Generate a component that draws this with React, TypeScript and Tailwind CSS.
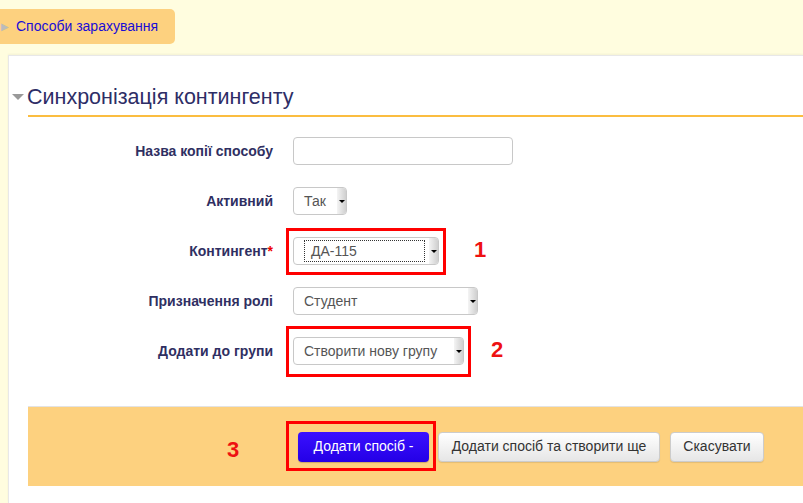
import type { ReactNode } from "react";

const font = { fontFamily: '"Liberation Sans", Arial, sans-serif' };

const Select = ({
  value,
  width,
  focused = false,
}: {
  value: string;
  width: string;
  focused?: boolean;
}) => (
  <div
    className={`relative flex h-[28px] items-stretch rounded-[4px] border border-[#c8c8c8] bg-white ${width}`}
  >
    <div className="flex flex-1 items-center pl-[10px] text-[14px] text-[#555]">
      {focused ? (
        <div className="flex h-[22px] flex-1 items-center border border-dotted border-[#333] pl-[6px]">
          {value}
        </div>
      ) : (
        value
      )}
    </div>
    <div className="ml-[4px] flex w-[9px] items-center justify-center rounded-r-[3px] bg-gradient-to-r from-[#f4f4f4] to-[#cfcfcf]">
      <div className="h-0 w-0 border-x-[3px] border-t-[3px] border-x-transparent border-t-black" />
    </div>
  </div>
);

const Row = ({ label, children }: { label: ReactNode; children: ReactNode }) => (
  <div className="flex h-[28px] items-center">
    <div className="w-[264px] text-right text-[14px] font-bold text-[#2f2f62]">
      {label}
    </div>
    <div className="ml-[20px] flex items-center">{children}</div>
  </div>
);

const Marker = ({ n }: { n: string }) => (
  <span className="text-[22px] font-bold leading-none text-[#ee1111]">{n}</span>
);

export default function App() {
  return (
    <div className="min-h-[503px] overflow-hidden bg-[#fffddf]" style={font}>
      {/* tab strip */}
      <div className="h-[55px] pt-[9px]">
        <div className="flex h-[35px] w-[175px] items-center rounded-r-[5px] bg-[#fdd17f]">
          <span className="ml-[1px] text-[10px] text-[#bbb]">▶</span>
          <span className="ml-[7px] text-[14px] text-[#1a0dd6]">
            Способи зарахування
          </span>
        </div>
      </div>

      {/* panel */}
      <div className="ml-[8px] min-h-[448px] border-l border-t border-[#e8e8e8] bg-white shadow-[0_-1px_2px_rgba(0,0,0,0.05)]">
        <div className="flex items-center pl-[3px] pt-[29px]">
          <div className="h-0 w-0 border-x-[6px] border-t-[6px] border-x-transparent border-t-[#999]" />
          <h2 className="ml-[3px] text-[21.5px] leading-[24px] text-[#2d2d66]">
            Синхронізація контингенту
          </h2>
        </div>
        <div className="ml-[19px] mt-[6px] h-[2px] bg-[#fbbd40]" />

        <div className="mt-[20px] flex flex-col gap-[22px]">
          <Row label="Назва копії способу">
            <div className="h-[28px] w-[220px] rounded-[4px] border border-[#c8c8c8] bg-white" />
          </Row>
          <Row label="Активний">
            <Select value="Так" width="w-[54px]" />
          </Row>
          <Row
            label={
              <>
                Контингент<span className="text-[#e00]">*</span>
              </>
            }
          >
            <div className="relative">
              <Select value="ДА-115" width="w-[146px]" focused />
              <div className="pointer-events-none absolute -bottom-[10px] -left-[7px] -right-[7px] -top-[9px] border-[3px] border-[#f00]" />
            </div>
            <span className="ml-[35px]">
              <Marker n="1" />
            </span>
          </Row>
          <Row label="Призначення ролі">
            <Select value="Студент" width="w-[185px]" />
          </Row>
          <Row label="Додати до групи">
            <div className="relative">
              <Select value="Створити нову групу" width="w-[171px]" />
              <div className="pointer-events-none absolute -bottom-[12px] -left-[7px] -right-[7px] -top-[11px] border-[3px] border-[#f00]" />
            </div>
            <span className="ml-[27px]">
              <Marker n="2" />
            </span>
          </Row>
        </div>

        {/* buttons */}
        <div className="ml-[19px] mt-[41px] flex h-[80px] items-center border-t border-[#e3e3e3] bg-[#fdd17f] pl-[199px]">
          <span className="mt-[10px] w-[71px]">
            <Marker n="3" />
          </span>
          <div className="relative">
            <button className="h-[30px] w-[131px] rounded-[4px] bg-gradient-to-b from-[#3a10ff] to-[#2400e6] text-[14px] text-white shadow-[0_1px_1px_rgba(0,0,0,0.2)]">
              Додати спосіб -
            </button>
            <div className="pointer-events-none absolute -bottom-[9px] -left-[12px] -right-[7px] -top-[11px] border-[3px] border-[#f00]" />
          </div>
          <button className="ml-[9px] h-[30px] w-[222px] rounded-[4px] border border-[#ccc] bg-gradient-to-b from-white to-[#e6e6e6] text-[14px] text-[#333] shadow-[0_1px_1px_rgba(0,0,0,0.1)]">
            Додати спосіб та створити ще
          </button>
          <button className="ml-[10px] h-[30px] w-[94px] rounded-[4px] border border-[#ccc] bg-gradient-to-b from-white to-[#e6e6e6] text-[14px] text-[#333] shadow-[0_1px_1px_rgba(0,0,0,0.1)]">
            Скасувати
          </button>
        </div>
      </div>
    </div>
  );
}
